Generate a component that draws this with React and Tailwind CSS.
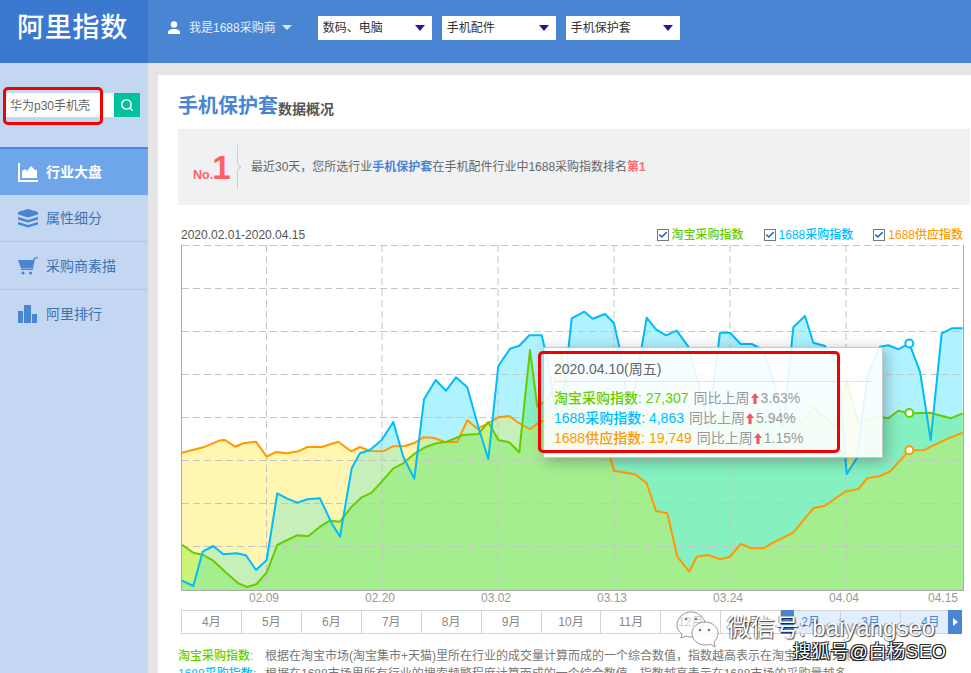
import React from "react";
import { Search, Check } from "lucide-react";

// chart points are read off two crops, so convert them to page pixels
const left = (pts) => pts.map(([x, y]) => [x / 3 + 170, y / 3 + 240]);
const right = (pts) => pts.map(([x, y]) => [x / 3 + 530, y / 3 + 240]);
const toLine = (pts) => "M" + pts.map(([x, y]) => `${x.toFixed(1)} ${y.toFixed(1)}`).join("L");
const toArea = (pts) => `${toLine(pts)}L${pts[pts.length - 1][0].toFixed(1)} 590L${pts[0][0].toFixed(1)} 590Z`;

const orange = [
  ...left([[36,638],[100,622],[150,601],[165,600],[195,620],[220,610],[258,605],[290,650],[318,636],[350,640],[385,634],[412,621],[455,621],[505,605],[543,634],[570,621],[600,633],[640,634],[668,619],[705,618],[735,608],[760,592],[790,593],[825,606],[862,606],[892,541],[922,566],[955,550],[985,532],[1018,528],[1045,548]]),
  ...right([[0,568],[30,545],[70,530],[120,522],[200,540],[225,600],[252,692],[315,703],[350,730],[378,813],[412,820],[442,950],[478,995],[500,950],[535,945],[570,958],[600,950],[632,912],[665,925],[700,925],[730,908],[790,878],[850,805],[885,797],[945,755],[985,747],[1012,715],[1050,708],[1080,695],[1138,631],[1180,631],[1240,602],[1298,578]]),
];
const blue = [
  ...left([[36,1022],[70,1038],[98,935],[130,918],[160,943],[200,940],[228,946],[258,990],[290,960],[322,760],[350,775],[382,788],[412,778],[450,775],[485,850],[510,890],[545,685],[570,640],[600,630],[635,600],[670,546],[700,650],[733,716],[762,478],[797,420],[828,452],[858,412],[892,442],[925,560],[955,657],[985,378],[1020,326],[1048,317],[1078,286]]),
  ...right([[0,286],[35,286],[50,350],[70,470],[90,560],[125,235],[163,215],[188,236],[225,222],[252,250],[270,330],[300,530],[350,233],[378,268],[408,286],[440,272],[475,320],[510,450],[535,560],[570,278],[600,278],[632,312],[665,312],[700,330],[735,440],[760,560],[790,262],[825,228],[850,308],[885,318],[925,380],[950,702],[980,655],[1012,410],[1050,320],[1075,316],[1105,328],[1138,310],[1170,395],[1202,600],[1235,280],[1265,265],[1298,265]]),
];
const green = [
  ...left([[36,914],[70,938],[100,945],[130,962],[170,1000],[205,1030],[232,1041],[260,1032],[290,997],[322,915],[380,886],[415,889],[450,860],[480,842],[510,845],[545,800],[575,772],[605,758],[635,725],[670,685],[700,670],[735,640],[765,622],[800,610],[830,605],[880,585],[925,582],[955,546],[985,600],[1018,607],[1048,637]]),
  ...right([[0,330],[22,500],[60,470],[95,340],[125,500],[180,520],[220,530],[300,520],[400,530],[500,530],[620,540],[700,530],[780,530],[820,545],[850,500],[880,530],[920,560],[950,420],[985,545],[1050,530],[1075,535],[1105,512],[1138,520],[1200,518],[1262,535],[1298,520]]),
];

const gridX = [266.5, 382, 498, 614, 730, 846];
const gridY = [245.5, 288.5, 331.5, 374.5, 417.5, 460.5, 503.5, 546.5];
const axisLabels = [["02.09", 264], ["02.20", 380], ["03.02", 496], ["03.13", 612], ["03.24", 728], ["04.04", 844], ["04.15", 943]];
const months = ["4月", "5月", "6月", "7月", "8月", "9月", "10月", "11月", "12月", "1月", "2月", "3月", "4月"];

const tipRows = [
  { name: "淘宝采购指数", value: "27,307", pct: "3.63%", color: "text-[#66cc00]" },
  { name: "1688采购指数", value: "4,863", pct: "5.94%", color: "text-[#00bbff]" },
  { name: "1688供应指数", value: "19,749", pct: "1.15%", color: "text-[#ff9900]" },
];

function Chart() {
  return (
    <svg viewBox="178 244 790 364" className="block w-[790px] h-[364px]">
      <defs>
        <clipPath id="clipOrange"><path d={toArea(orange)} /></clipPath>
        <clipPath id="clipBlue"><path d={toArea(blue)} /></clipPath>
      </defs>
      <path d={toArea(orange)} fill="#fff6b2" />
      <path d={toArea(blue)} fill="#b1f2ff" />
      <path d={toArea(green)} fill="#cdf478" />
      <g clipPath="url(#clipOrange)">
        <path d={toArea(blue)} fill="#c6efb9" />
        <path d={toArea(green)} fill="#cdf478" />
      </g>
      <g clipPath="url(#clipBlue)">
        <path d={toArea(green)} fill="#85f0c0" />
        <g clipPath="url(#clipOrange)">
          <path d={toArea(green)} fill="#a4ee90" />
        </g>
      </g>
      {gridY.map((y) => (
        <line key={y} x1="182" x2="963" y1={y} y2={y} stroke="#c4c4c4" strokeDasharray="7 4" />
      ))}
      {gridX.map((x) => (
        <line key={x} x1={x} x2={x} y1="245" y2="590" stroke="#c4c4c4" strokeDasharray="7 4" />
      ))}
      <path d="M181.5 245V590.5H963.5V245" fill="none" stroke="#a8a8a8" />
      <path d={toLine(orange)} fill="none" stroke="#ff9900" strokeWidth="2" strokeLinejoin="round" />
      <path d={toLine(green)} fill="none" stroke="#66cc00" strokeWidth="2" strokeLinejoin="round" />
      <path d={toLine(blue)} fill="none" stroke="#00bbff" strokeWidth="2" strokeLinejoin="round" />
      <circle cx="909.3" cy="343.5" r="4" fill="#fff" stroke="#00bbff" strokeWidth="2" />
      <circle cx="909.3" cy="413" r="4" fill="#fff" stroke="#66cc00" strokeWidth="2" />
      <circle cx="909.3" cy="450.3" r="4" fill="#fff" stroke="#ff9900" strokeWidth="2" />
      {axisLabels.map(([label, x]) => (
        <text key={label} x={x} y="602" textAnchor="middle" fontSize="12" fill="#999">{label}</text>
      ))}
    </svg>
  );
}

function Tooltip() {
  return (
    <div className="absolute left-[365px] top-[103px] w-[340px] h-[111px] bg-white/90 border border-[#c8c8c8] shadow-[3px_3px_14px_rgba(0,0,0,0.28)] pl-[10px] pr-[10px]">
      <div className="h-[34px] leading-[42px] border-b border-[#e4e4e4] text-[14px] text-[#666]">2020.04.10(周五)</div>
      <div className="pt-[6px] text-[14px] leading-[20px]">
        {tipRows.map((row) => (
          <div key={row.name} className="flex items-center whitespace-nowrap">
            <span className={`font-medium ${row.color}`}>{row.name}: {row.value}</span>
            <span className="ml-[5px] text-[#999]">同比上周</span>
            <svg viewBox="0 0 8 11" className="w-[8px] h-[11px] mx-[1px]">
              <path d="M4 0L8 5H5.6V11H2.4V5H0Z" fill="#f4595f" />
            </svg>
            <span className="ml-[1px] text-[#999]">{row.pct}</span>
          </div>
        ))}
      </div>
    </div>
  );
}

function NavIcon({ name, active }) {
  const fill = active ? "#fff" : "#4a85d3";
  if (name === "area") {
    return (
      <svg viewBox="0 0 20 19" className="w-[20px] h-[19px]">
        <path d="M0 0H2V17H20V19H0Z" fill={fill} />
        <path d="M4 15V8L7 6L9 8L13 3L17 7L19 7V15Z" fill={fill} />
      </svg>
    );
  }
  if (name === "layers") {
    return (
      <svg viewBox="0 0 20 19" className="w-[20px] h-[19px]">
        <path d="M10 0L20 3V5.5L10 8.5L0 5.5V3Z" fill={fill} />
        <path d="M0 8L10 11L20 8V10.5L10 13.5L0 10.5Z" fill={fill} />
        <path d="M0 13L10 16L20 13V15.5L10 18.5L0 15.5Z" fill={fill} />
      </svg>
    );
  }
  if (name === "cart") {
    return (
      <svg viewBox="0 0 20 18" className="w-[20px] h-[18px]">
        <path d="M0 3H15.5L14 11.5H3Z" fill={fill} />
        <path d="M15 3L16 0.8L20 0V1.2L17 1.8L14.6 13H3V12H13.8Z" fill={fill} />
        <circle cx="5" cy="16" r="1.6" fill={fill} />
        <circle cx="12.5" cy="16" r="1.6" fill={fill} />
      </svg>
    );
  }
  return (
    <svg viewBox="0 0 20 18" className="w-[20px] h-[18px]">
      <path d="M0 6H5V18H0ZM6 0H13V18H6ZM14 9H19V18H14Z" fill={fill} />
    </svg>
  );
}

const navItems = [
  { name: "area", label: "行业大盘", active: true },
  { name: "layers", label: "属性细分" },
  { name: "cart", label: "采购商素描" },
  { name: "bars", label: "阿里排行" },
];

function Sidebar() {
  return (
    <aside className="w-[148px] shrink-0 bg-[#c3d7f3]">
      <div className="relative flex ml-[6px] mt-[30px] w-[134px] h-[24px]">
        <div className="flex-1 bg-white text-[12px] leading-[26px] pl-[4px] text-[#666]">华为p30手机壳</div>
        <div className="w-[26px] bg-[#00c29f] flex items-center justify-center">
          <Search className="w-[14px] h-[14px] text-white" strokeWidth={2.5} />
        </div>
        <div className="absolute left-[-3px] top-[-6px] w-[100px] h-[38px] border-[3px] border-[#f00000] rounded-[5px]" />
      </div>
      <nav className="mt-[30px]">
        {navItems.map((item) => (
          <div
            key={item.name}
            className={`flex items-center h-[47.5px] pl-[18px] gap-[8px] text-[14px] ${
              item.active
                ? "bg-[#6fa5e9] border-t-2 border-[#4f8ad8] pt-[1px] text-white font-bold"
                : "border-b border-[#aec6e8] last:border-b-0 pt-[2px] text-[#3f72ad]"
            }`}
          >
            <NavIcon name={item.name} active={item.active} />
            <span>{item.label}</span>
          </div>
        ))}
      </nav>
    </aside>
  );
}

function Select({ label }) {
  return (
    <div className="flex items-center justify-between w-[114px] h-[24px] bg-white pl-[5px] pr-[7px] text-[12px] text-[#333]">
      <span>{label}</span>
      <span className="w-0 h-0 border-x-[5px] border-x-transparent border-t-[6px] border-t-[#1c1c9a]" />
    </div>
  );
}

function Header() {
  return (
    <header className="flex h-[63px] bg-[#4a85d3]">
      <div className="w-[148px] shrink-0 bg-[#3b78cf] pl-[17px] text-[27px] font-medium leading-[56px] text-white tracking-[0.75px]">阿里指数</div>
      <div className="flex items-center h-[55px] pl-[20px] text-[12px] text-[#e6eefa]">
        <svg viewBox="0 0 12 13" className="w-[12px] h-[13px]">
          <circle cx="6" cy="3.5" r="3.2" fill="#fff" />
          <path d="M0 13V11C0 9 3 8 6 8S12 9 12 11V13Z" fill="#fff" />
        </svg>
        <span className="ml-[9px]">我是1688采购商</span>
        <span className="ml-[6px] w-0 h-0 border-x-[5px] border-x-transparent border-t-[5px] border-t-[#dce8f8]" />
        <div className="flex gap-[10px] ml-[26px]">
          <Select label="数码、电脑" />
          <Select label="手机配件" />
          <Select label="手机保护套" />
        </div>
      </div>
    </header>
  );
}

function Legend({ label, color }) {
  return (
    <div className="flex items-center gap-[3px]">
      <span className="w-[12px] h-[12px] border border-[#777] bg-white flex items-center justify-center">
        <Check className="w-[10px] h-[10px] text-[#0a5fe0]" strokeWidth={3.5} />
      </span>
      <span className={`text-[12px] font-medium ${color}`}>{label}</span>
    </div>
  );
}

function Timeline() {
  return (
    <div className="relative flex w-[781px] h-[24px] ml-[3px] mt-[2px] border border-[#d4d4d4]">
      {months.map((m, i) => (
        <div key={i} className={`flex-1 text-center text-[12px] leading-[22px] border-r border-[#d4d4d4] last:border-r-0 ${i > 9 ? "bg-[#e1eefc] text-[#4a85d3]" : "text-[#888]"}`}>
          {m}
        </div>
      ))}
      <div className="absolute left-[599px] top-[-1px] w-[13px] h-[24px] bg-[#4a85d3]" />
      <div className="absolute left-[766px] top-[-1px] w-[14px] h-[24px] bg-[#4a85d3] flex items-center justify-center">
        <span className="w-0 h-0 border-y-[4px] border-y-transparent border-l-[5px] border-l-white" />
      </div>
    </div>
  );
}

function Watermark() {
  return (
    <div className="absolute left-[676px] top-[610px] w-[295px] h-[56px] text-white pointer-events-none">
      <svg viewBox="0 0 44 46" className="absolute left-0 top-0 w-[44px] h-[46px]" stroke="#8a8a8a" strokeWidth="0.9">
        <path d="M29 12C27 6 21 2 15 2C7 2 1 8 1 15C1 19 3 22 6 24L5 28L10 26C12 27 14 27 17 27Z" fill="#ffffff" fillOpacity="0.6" />
        <path d="M42 23C42 17 36 12 29 12C22 12 16 17 16 23C16 30 22 35 29 35C31 35 32 35 34 34L39 37L38 32C40 30 42 27 42 23Z" fill="#ffffff" fillOpacity="0.85" />
        <circle cx="10" cy="9" r="1.3" fill="#777" stroke="none" />
        <circle cx="20" cy="9" r="1.3" fill="#777" stroke="none" />
        <circle cx="24" cy="20" r="1.3" fill="#777" stroke="none" />
        <circle cx="33" cy="20" r="1.3" fill="#777" stroke="none" />
      </svg>
      <div className="absolute left-[51px] top-[3px] text-[24px] leading-[30px] whitespace-nowrap [text-shadow:1px_1px_1px_rgba(0,0,0,0.75),-1px_0_1px_rgba(0,0,0,0.45)]">微信号: baiyangseo</div>
      <div className="absolute left-[117px] top-[30px] text-[18px] leading-[24px] tracking-[0.8px] whitespace-nowrap [text-shadow:-1px_1px_0_#111,1px_1px_0_#111,-1px_-1px_0_#333,1px_-1px_0_#333]">搜狐号@白杨SEO</div>
    </div>
  );
}

export default function App() {
  return (
    <div className="relative w-[971px] h-[673px] overflow-hidden bg-white [font-family:'Liberation_Sans','Noto_Sans_CJK_SC',sans-serif]">
      <Header />
      <div className="flex h-[610px]">
        <Sidebar />
        <main className="flex-1 bg-[#e5e5e5] pl-[10px] pt-[12px]">
          <div className="h-full bg-white pl-[20px] pr-px">
            <div className="flex items-end h-[45px] pb-[1px]">
              <span className="text-[20px] leading-[26px] font-bold text-[#4a85d3]">手机保护套</span>
              <span className="text-[14px] leading-[20px] font-bold text-[#555]">数据概况</span>
            </div>
            <div className="flex items-center h-[76px] mt-[9px] bg-[#f0f1f3] pl-[15px]">
              <div className="flex items-end w-[34px] text-[#ff5f66]">
                <span className="text-[12.5px] font-bold leading-[16px]">No.</span>
                <span className="text-[33px] leading-[32px] font-bold -ml-px translate-y-[1px]">1</span>
              </div>
              <div className="relative ml-[10px] w-px h-[44px] bg-[#cfcfcf]">
                <span className="absolute left-[-3px] top-[19px] w-[6px] h-[6px] rotate-45 border-t border-r border-[#cfcfcf] bg-[#f0f1f3]" />
              </div>
              <p className="ml-[13px] text-[12px] text-[#666]">
                最近30天，您所选行业<b className="text-[#4a85d3]">手机保护套</b>在手机配件行业中1688采购指数排名<b className="text-[#ff6b70]">第1</b>
              </p>
            </div>
            <div className="flex items-center justify-between h-[39px] pt-[21px] pl-[3px] pr-[7px]">
              <span className="text-[12px] text-[#555]">2020.02.01-2020.04.15</span>
              <div className="flex gap-[20px]">
                <Legend label="淘宝采购指数" color="text-[#66cc00]" />
                <Legend label="1688采购指数" color="text-[#00bbff]" />
                <Legend label="1688供应指数" color="text-[#ff9900]" />
              </div>
            </div>
            <div className="relative w-[790px]">
              <Chart />
              <Tooltip />
              <div className="absolute left-[360px] top-[107px] w-[302px] h-[102px] border-[3px] border-[#f00000] rounded-[5px]" />
            </div>
            <Timeline />
            <div className="mt-[13px] text-[12px] leading-[18px] whitespace-nowrap">
              <p><b className="inline-block w-[87px] font-medium text-[#66cc00]">淘宝采购指数:</b><span className="text-[#777]">根据在淘宝市场(淘宝集市+天猫)里所在行业的成交量计算而成的一个综合数值，指数越高表示在淘宝市场的采购量越多</span></p>
              <p><b className="inline-block w-[87px] font-medium text-[#00bbff]">1688采购指数:</b><span className="text-[#777]">根据在1688市场里所有行业的搜索频繁程度计算而成的一个综合数值，指数越高表示在1688市场的采购量越多</span></p>
            </div>
          </div>
        </main>
      </div>
      <Watermark />
    </div>
  );
}
